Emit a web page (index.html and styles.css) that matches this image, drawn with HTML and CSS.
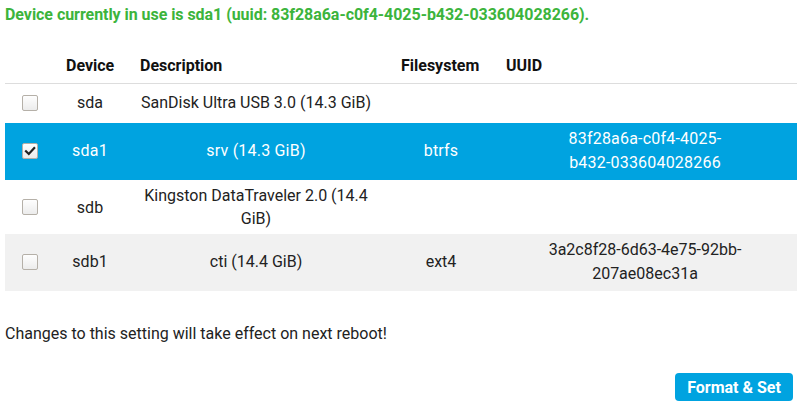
FILE: index.html
```html
<!DOCTYPE html>
<html>
<head>
<meta charset="utf-8">
<link rel="stylesheet" href="styles.css">
</head>
<body>
<div class="page">
  <h2 class="status">Device currently in use is sda1 (uuid: 83f28a6a-c0f4-4025-b432-033604028266).</h2>
  <table class="devices">
    <colgroup>
      <col class="c-check"><col class="c-dev"><col class="c-desc"><col class="c-fs"><col class="c-uuid">
    </colgroup>
    <thead>
      <tr><th></th><th class="h-dev">Device</th><th class="h-desc">Description</th><th class="h-fs">Filesystem</th><th class="h-uuid">UUID</th></tr>
    </thead>
    <tbody>
      <tr><td class="check"><span class="cb"></span></td><td>sda</td><td>SanDisk Ultra USB 3.0 (14.3 GiB)</td><td></td><td class="uuid"></td></tr>
      <tr class="selected"><td class="check"><span class="cb checked"><svg viewBox="0 0 12 12" width="12" height="12"><path d="M2 6.2 L4.8 9 L10.2 3" fill="none" stroke="#222" stroke-width="2.2" stroke-linecap="square"/></svg></span></td><td>sda1</td><td>srv (14.3 GiB)</td><td>btrfs</td><td class="uuid">83f28a6a-c0f4-4025-b432-033604028266</td></tr>
      <tr class="tight"><td class="check"><span class="cb"></span></td><td>sdb</td><td>Kingston DataTraveler 2.0 (14.4 GiB)</td><td></td><td class="uuid"></td></tr>
      <tr class="alt"><td class="check"><span class="cb"></span></td><td>sdb1</td><td>cti (14.4 GiB)</td><td>ext4</td><td class="uuid">3a2c8f28-6d63-4e75-92bb-207ae08ec31a</td></tr>
    </tbody>
  </table>
  <p class="note">Changes to this setting will take effect on next reboot!</p>
  <div class="actions"><button class="btn">Format &amp; Set</button></div>
</div>
</body>
</html>
```

FILE: styles.css
```css
html, body {
  margin: 0;
  padding: 0;
  background: #fff;
}
body {
  font-family: Roboto, "Liberation Sans", sans-serif;
  font-size: 16px;
  color: #222;
}
.page {
  padding: 0 6px 0 5px;
}
.status {
  margin: 0;
  padding-top: 5px;
  font-size: 16px;
  letter-spacing: -0.05px;
  line-height: 20px;
  font-weight: bold;
  color: #3cb43c;
}
.devices {
  margin-top: 21px;
  width: 792px;
  border-collapse: collapse;
  table-layout: fixed;
}
.c-check { width: 52px; }
.c-dev { width: 66px; }
.c-desc { width: 266px; }
.c-fs { width: 104px; }
.c-uuid { width: 304px; }
.devices th {
  text-align: left;
  font-weight: bold;
  padding: 8px 4px 5px;
  line-height: 24px;
  border-bottom: 1px solid #ddd;
  color: #111;
}
.devices th.h-dev { padding-left: 9px; }
.devices th.h-desc { padding-left: 17px; }
.devices th.h-fs { padding-left: 12px; }
.devices th.h-uuid { padding-left: 13px; }
.devices td {
  text-align: center;
  padding: 4px 8px 5px;
  height: 30px;
  line-height: 24px;
  vertical-align: middle;
}
.devices td.uuid {
  padding-left: 52px;
  padding-right: 52px;
}
.devices tr.selected td.uuid {
  padding-left: 62px;
  padding-right: 62px;
}
.devices tr.tight td {
  line-height: 23px;
  padding-top: 4px;
  padding-bottom: 4px;
}
.devices td.check {
  padding-left: 17px;
  text-align: left;
}
.devices tr.alt td { background: #f1f1f1; }
.devices tr.selected td {
  background: #00a3e0;
  color: #fff;
  letter-spacing: 0.2px;
}
.cb {
  display: inline-block;
  width: 14px;
  height: 14px;
  border: 1px solid #b5b0a8;
  border-radius: 2px;
  background: linear-gradient(#fefefe, #ececec);
  vertical-align: middle;
  position: relative;
  top: -1px;
  box-sizing: content-box;
}
.cb svg {
  position: absolute;
  left: 1px;
  top: 1px;
}
.note {
  margin: 31px 0 0;
  line-height: 24px;
}
.actions {
  display: flex;
  justify-content: flex-end;
  margin-top: 27px;
  padding-right: 4px;
}
.btn {
  font-family: Roboto, "Liberation Sans", sans-serif;
  font-size: 16px;
  font-weight: bold;
  color: #fff;
  background: #00a3e0;
  border: none;
  border-radius: 4px;
  width: 118px;
  height: 28px;
  padding: 0;
}
```
